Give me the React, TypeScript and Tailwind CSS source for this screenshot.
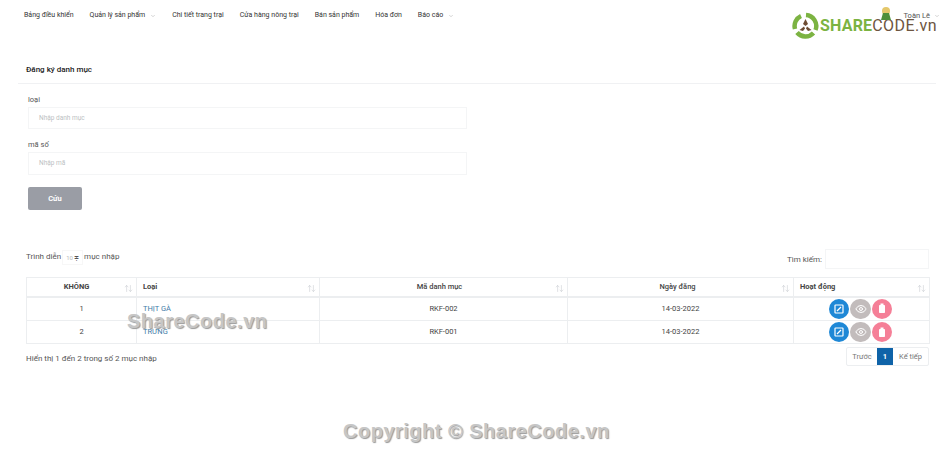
import { ArrowUpDown, ChevronDown, Eye } from 'lucide-react';

const navItems = [
  { label: 'Bảng điều khiển' },
  { label: 'Quản lý sản phẩm', hasMenu: true },
  { label: 'Chi tiết trang trại' },
  { label: 'Cửa hàng nông trại' },
  { label: 'Bán sản phẩm' },
  { label: 'Hóa đơn' },
  { label: 'Báo cáo', hasMenu: true },
];

const rows = [
  { no: 1, name: 'THỊT GÀ', code: 'RKF-002', date: '14-03-2022', height: 'h-[24px]' },
  { no: 2, name: 'TRỨNG', code: 'RKF-001', date: '14-03-2022', height: 'h-[23px]' },
];

function SortIcon() {
  return <ArrowUpDown strokeWidth={1.5} className="absolute right-[3px] top-[6px] w-[9px] h-[9px] text-[#c8ccd0]" />;
}

function EditIcon() {
  return (
    <svg width="10" height="10" viewBox="0 0 10 10" fill="none" stroke="white">
      <rect x="1" y="1" width="8" height="8" rx="0.5" strokeWidth="1.2" />
      <path d="M3 7 L7 3" strokeWidth="1.2" />
    </svg>
  );
}

function TrashIcon() {
  return (
    <svg width="10" height="11" viewBox="0 0 10 11" fill="white">
      <rect x="3.5" y="0.5" width="3" height="1.5" />
      <rect x="2" y="2" width="6" height="8" rx="0.8" />
    </svg>
  );
}

function Logo() {
  return (
    <div className="absolute left-[792px] top-[7px] flex items-start">
      <svg width="27" height="32" viewBox="0 0 27 32" fill="none" className="mt-[5px]">
        <g stroke="#7cb342" strokeWidth="4.5">
          <path d="M14 3 A11 11 0 0 1 23.5 18" />
          <path d="M21.5 21 A11 11 0 0 1 5 20.5" />
          <path d="M3 17 A11 11 0 0 1 9 4" />
        </g>
        <path d="M13.5 7 L16 12 L13.5 14 L11 12 Z" fill="#6d4c33" />
        <path d="M7.5 18 L12 14.5 L13 16.5 L11 19 Z" fill="#6d4c33" />
        <path d="M19.5 18 L15 14.5 L14 16.5 L16 19 Z" fill="#6d4c33" />
      </svg>
      <div className="relative ml-[1px] mt-[11px] flex items-center text-[16px] leading-[16px] font-['Roboto',sans-serif]">
        <span className="font-bold text-[#7cb342] tracking-[0.2px]">SHARE</span>
        <span className="text-[#6d5540] tracking-[0.4px]">CODE.vn</span>
        <svg width="12" height="14" viewBox="0 0 12 14" className="absolute left-[60px] -top-[11px]">
          <circle cx="6" cy="4" r="4" fill="#e4c76a" />
          <path d="M1 13 L3 6 L9 6 L11 13 Z" fill="#4f8f3a" />
        </svg>
      </div>
    </div>
  );
}

function Watermark({ className, text }: { className: string; text: string }) {
  return (
    <div
      className={`absolute font-['Liberation_Sans',sans-serif] font-bold tracking-[0.5px] text-[#c6c6c6] [text-shadow:1px_1px_1px_#999] whitespace-nowrap ${className}`}
    >
      {text}
    </div>
  );
}

export default function App() {
  return (
    <div className="relative w-[950px] h-[453px] overflow-hidden bg-white text-[#333] font-['Roboto',sans-serif]">
      <nav className="h-[31px] pl-[24px] pr-[10px] flex items-center justify-between text-[7px] text-[#333]">
        <div className="flex items-center gap-[16px]">
          {navItems.map((item) => (
            <span key={item.label} className="flex items-center gap-[5px]">
              {item.label}
              {item.hasMenu && <ChevronDown className="w-[6px] h-[6px] text-[#aaa]" />}
            </span>
          ))}
        </div>
        <span className="relative z-10 flex items-center gap-[4px] text-[7.5px] text-[#555]">
          Toàn Lê
          <ChevronDown className="w-[6px] h-[6px] text-[#aaa]" />
        </span>
      </nav>

      <section className="mt-[31px] ml-[18px] mr-[14px]">
        <h1 className="pl-[8px] h-[22px] pb-[6px] flex items-center text-[8px] font-medium text-[#222] border-b border-[#f0f1f3]">
          Đăng ký danh mục
        </h1>

        <form className="pl-[10px] pt-[11px]">
          <label className="block text-[7.5px] leading-[10px] text-[#555]">loại</label>
          <div className="mt-[2px] w-[439px] h-[22px] pl-[10px] pt-[2px] flex items-center border border-[#f4f5f6] text-[6.5px] text-[#bcbfc3]">
            Nhập danh mục
          </div>
          <label className="block mt-[11px] text-[7.5px] leading-[10px] text-[#555]">mã số</label>
          <div className="mt-[2px] w-[439px] h-[23px] pl-[10px] pt-[1px] flex items-center border border-[#f4f5f6] text-[6.5px] text-[#bcbfc3]">
            Nhập mã
          </div>
          <button
            type="button"
            className="block mt-[12px] w-[54px] h-[23px] rounded-[2px] bg-[#9a9da5] text-white text-[7.5px] font-bold"
          >
            Cứu
          </button>
        </form>
      </section>

      <section className="mt-[39px] ml-[21px] mr-[21px] pl-[5px]">
        <div className="h-[20px] flex items-center justify-between">
          <div className="flex items-center text-[8px] text-[#555] -mt-[4px]">
            <span>Trình diễn</span>
            <span className="mx-[1px] w-[21px] h-[15px] flex items-center justify-center gap-[1px] border border-[#f7f7f7] text-[6px] text-[#bbb]">
              10<span className="text-[6px] text-[#555]">≑</span>
            </span>
            <span>mục nhập</span>
          </div>
          <div className="flex items-center gap-[3px] text-[8px] text-[#555]">
            <span className="pt-[2px]">Tìm kiếm:</span>
            <div className="w-[104px] h-[20px] border border-[#f4f5f6]" />
          </div>
        </div>

        <table className="mt-[8px] w-[903px] table-fixed border-collapse text-[7.5px]">
          <thead>
            <tr className="h-[19px] text-[#444] font-bold">
              <th className="relative w-[110px] border border-[#eceef0] border-b-2 text-center pr-[10px]">
                KHÔNG
                <SortIcon />
              </th>
              <th className="relative w-[183px] border border-[#eceef0] border-b-2 text-left pl-[6px]">
                Loại
                <SortIcon />
              </th>
              <th className="relative w-[248px] border border-[#eceef0] border-b-2 text-center font-medium pr-[8px]">
                Mã danh mục
                <SortIcon />
              </th>
              <th className="relative w-[226px] border border-[#eceef0] border-b-2 text-center font-medium pr-[6px]">
                Ngày đăng
                <SortIcon />
              </th>
              <th className="relative w-[136px] border border-[#eceef0] border-b-2 text-left pl-[6px]">
                Hoạt động
                <SortIcon />
              </th>
            </tr>
          </thead>
          <tbody>
            {rows.map((row) => (
              <tr key={row.no} className={`${row.height} text-[#444]`}>
                <td className="border border-[#eceef0] text-center">{row.no}</td>
                <td className="border border-[#eceef0] pl-[6px] text-[#3f7ca8]">{row.name}</td>
                <td className="border border-[#eceef0] text-center">{row.code}</td>
                <td className="border border-[#eceef0] text-center">{row.date}</td>
                <td className="border border-[#eceef0]">
                  <div className="flex items-center justify-center gap-[1px] pr-[2px]">
                    <span className="w-[20px] h-[20px] rounded-full bg-[#1f88d6] flex items-center justify-center">
                      <EditIcon />
                    </span>
                    <span className="w-[21px] h-[20px] rounded-full bg-[#c2bcbc] flex items-center justify-center text-white">
                      <Eye className="w-[12px] h-[12px]" />
                    </span>
                    <span className="w-[20px] h-[20px] rounded-full bg-[#f57f97] flex items-center justify-center">
                      <TrashIcon />
                    </span>
                  </div>
                </td>
              </tr>
            ))}
          </tbody>
        </table>

        <div className="mt-[3px] w-[903px] flex items-start justify-between">
          <span className="mt-[6px] text-[8px] text-[#555]">Hiển thị 1 đến 2 trong số 2 mục nhập</span>
          <div className="h-[19px] flex items-center border border-[#eceef0] rounded-[2px] text-[7.5px] text-[#777]">
            <span className="w-[30px] text-center">Trước</span>
            <span className="w-[16px] h-full flex items-center justify-center bg-[#0f63a8] text-white font-bold">1</span>
            <span className="w-[35px] text-center">Kế tiếp</span>
          </div>
        </div>
      </section>

      <Logo />
      <Watermark className="left-[127px] top-[309px] text-[20px] leading-[24px]" text="ShareCode.vn" />
      <Watermark className="left-[343px] top-[419px] text-[20px] leading-[24px]" text="Copyright © ShareCode.vn" />
    </div>
  );
}
